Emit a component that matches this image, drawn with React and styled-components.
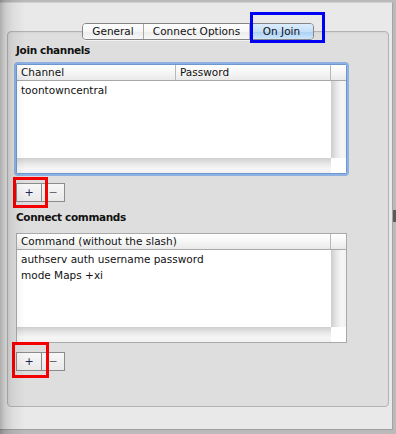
import React from 'react';
import styled, { createGlobalStyle } from 'styled-components';

const Global = createGlobalStyle`
  html, body { margin: 0; padding: 0; background: #b9b9b9; }
  body { width: 396px; height: 434px; overflow: hidden; font-family: "DejaVu Sans", Verdana, sans-serif; }
  * { box-sizing: border-box; }
`;

const Screen = styled.div`
  position: relative;
  width: 396px;
  height: 434px;
  background: #bababa;
  overflow: hidden;
  padding-top: 2px;
`;

const Window = styled.div`
  width: 393px;
  height: 428px;
  background: #e9e9e9;
  border-top: 1px solid #d2d2d2;
  border-right: 1px solid #a3a3a3;
  border-bottom: 1px solid #a0a0a0;
  padding: 20px 0 0 7px;
`;

const LeftShade = styled.div`
  position: absolute;
  left: 0;
  top: 0;
  bottom: 0;
  width: 28px;
  pointer-events: none;
  background: linear-gradient(
    to right,
    rgba(0, 0, 0, 0.26) 0px,
    rgba(0, 0, 0, 0.13) 5px,
    rgba(0, 0, 0, 0.05) 13px,
    rgba(0, 0, 0, 0) 26px
  );
`;

const Notch = styled.div`
  position: absolute;
  left: 393px;
  top: 210px;
  width: 3px;
  height: 12px;
  background: #5a5a5a;
`;

const TabsRow = styled.div`
  position: relative;
  z-index: 2;
  width: 382px;
  display: flex;
  justify-content: center;
`;

const Segmented = styled.div`
  display: flex;
  height: 17px;
  border: 1px solid #858585;
  border-radius: 4px;
  box-shadow: 0 1px 0 rgba(255, 255, 255, 0.6);
`;

const Segment = styled.div`
  position: relative;
  width: ${(p) => p.$w}px;
  height: 15px;
  line-height: 15px;
  text-align: center;
  font-size: 10.5px;
  color: #111;
  border-right: ${(p) => (p.$last ? 'none' : '1px solid #a9a9a9')};
  border-radius: ${(p) => (p.$first ? '3px 0 0 3px' : p.$last ? '0 3px 3px 0' : '0')};
  background: ${(p) =>
    p.$selected
      ? 'linear-gradient(#dcedfc 0%, #c3e0f9 50%, #a9d0f5 52%, #cde6fb 100%)'
      : 'linear-gradient(#ffffff 0%, #f6f6f6 50%, #ececec 52%, #f7f7f7 100%)'};
  white-space: nowrap;
`;

const BlueMark = styled.div`
  position: absolute;
  left: 0;
  top: -12px;
  width: 75px;
  height: 31px;
  border: 3px solid #0000f4;
  pointer-events: none;
`;

const Panel = styled.div`
  margin-top: -9px;
  width: 382px;
  height: 376px;
  background: #dedede;
  border: 1px solid #b3b3b3;
  border-radius: 4px;
  box-shadow: inset 0 1px 2px rgba(0, 0, 0, 0.05);
  padding: 12px 0 0 8px;
  display: flex;
  flex-direction: column;
  align-items: flex-start;
`;

const SectionLabel = styled.div`
  font-size: 10.5px;
  font-weight: bold;
  line-height: 13px;
  height: 13px;
  color: #111;
  letter-spacing: -0.35px;
  margin-top: ${(p) => p.$mt || 0}px;
`;

const Table = styled.div`
  margin-top: ${(p) => p.$mt}px;
  width: 331px;
  height: 110px;
  background: #fff;
  border: 1px solid ${(p) => (p.$focused ? '#6f98cf' : '#a9a9a9')};
  border-radius: ${(p) => (p.$focused ? '2px' : '0')};
  box-shadow: ${(p) => (p.$focused ? '0 0 0 2px #8db1e2' : 'none')};
  display: grid;
  grid-template-columns: 314px 15px;
  grid-template-rows: 16px 1fr 15px;
`;

const HeaderRow = styled.div`
  display: flex;
  border-bottom: 1px solid #a8a8a8;
  background: linear-gradient(#ffffff 0%, #f7f7f7 45%, #e9e9e9 100%);
`;

const HeaderCell = styled.div`
  width: ${(p) => p.$w}px;
  flex: none;
  height: 15px;
  line-height: 15px;
  padding-left: 4px;
  font-size: 10.5px;
  color: #111;
  border-right: 1px solid #b8b8b8;
  white-space: nowrap;
  overflow: hidden;
`;

const HeaderCorner = styled.div`
  border-bottom: 1px solid #a8a8a8;
  background: linear-gradient(#ffffff 0%, #f7f7f7 45%, #e9e9e9 100%);
`;

const Body = styled.div`
  padding-top: 1px;
`;

const Row = styled.div`
  height: 16px;
  line-height: 16px;
  padding-left: 4px;
  font-size: 10.5px;
  color: #111;
  white-space: nowrap;
`;

const VTrack = styled.div`
  background: linear-gradient(to right, #cdcdcd 0%, #e6e6e6 35%, #f6f6f6 70%, #f1f1f1 100%);
`;

const HTrack = styled.div`
  background: linear-gradient(#cfcfcf 0%, #e6e6e6 35%, #f6f6f6 70%, #f1f1f1 100%);
`;

const Corner = styled.div`
  background: #fff;
`;

const ButtonGroup = styled.div`
  position: relative;
  margin-top: 9px;
  display: flex;
`;

const SquareButton = styled.div`
  width: ${(p) => p.$w}px;
  height: 19px;
  border: 1px solid #8b8b8b;
  border-left: ${(p) => (p.$joined ? 'none' : '1px solid #8b8b8b')};
  background: linear-gradient(#f7f7f7, #e9e9e9);
  display: flex;
  align-items: center;
  justify-content: center;
  font-family: "DejaVu Sans", sans-serif;
  font-size: 11px;
  line-height: 1;
  color: ${(p) => p.$color};
`;

const RedMark = styled.div`
  position: absolute;
  left: ${(p) => p.$l}px;
  top: ${(p) => p.$t}px;
  width: ${(p) => p.$w}px;
  height: ${(p) => p.$h}px;
  border: 3px solid #f40000;
  pointer-events: none;
`;

function AddRemove({ mark }) {
  return (
    <ButtonGroup>
      <SquareButton $w={26} $color="#1b2756">+</SquareButton>
      <SquareButton $w={23} $joined $color="#6a6a6a">−</SquareButton>
      <RedMark $l={mark.l} $t={mark.t} $w={mark.w} $h={mark.h} />
    </ButtonGroup>
  );
}

export default function App() {
  return (
    <>
      <Global />
      <Screen>
        <Window>
          <TabsRow>
            <Segmented>
              <Segment $w={61} $first>General</Segment>
              <Segment $w={106}>Connect Options</Segment>
              <Segment $w={63} $last $selected>
                On Join
                <BlueMark />
              </Segment>
            </Segmented>
          </TabsRow>
          <Panel>
            <SectionLabel>Join channels</SectionLabel>
            <Table $mt={7} $focused>
              <HeaderRow>
                <HeaderCell $w={159}>Channel</HeaderCell>
                <HeaderCell $w={155}>Password</HeaderCell>
              </HeaderRow>
              <HeaderCorner />
              <Body>
                <Row>toontowncentral</Row>
              </Body>
              <VTrack />
              <HTrack />
              <Corner />
            </Table>
            <AddRemove mark={{ l: -3, t: -6, w: 35, h: 31 }} />
            <SectionLabel $mt={9}>Connect commands</SectionLabel>
            <Table $mt={9}>
              <HeaderRow>
                <HeaderCell $w={314}>Command (without the slash)</HeaderCell>
              </HeaderRow>
              <HeaderCorner />
              <Body>
                <Row>authserv auth username password</Row>
                <Row>mode Maps +xi</Row>
              </Body>
              <VTrack />
              <HTrack />
              <Corner />
            </Table>
            <AddRemove mark={{ l: -4, t: -10, w: 37, h: 36 }} />
          </Panel>
        </Window>
        <LeftShade />
        <Notch />
      </Screen>
    </>
  );
}
